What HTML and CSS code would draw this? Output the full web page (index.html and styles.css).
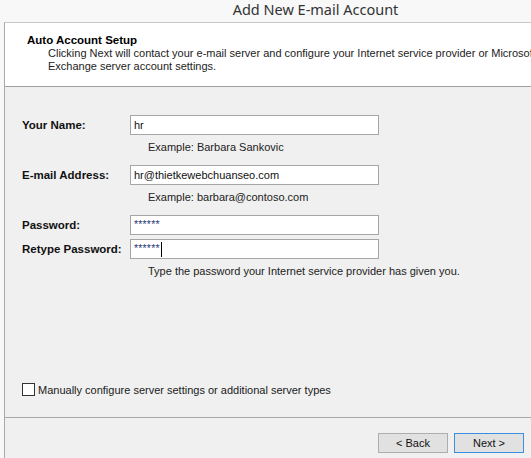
FILE: index.html
```html
<!DOCTYPE html>
<html>
<head>
<meta charset="utf-8">
<link rel="stylesheet" href="styles.css">
</head>
<body>
<div class="titlebar">Add New E-mail Account</div>
<div class="dialog">
  <div class="header">
    <div class="h-title">Auto Account Setup</div>
    <div class="h-desc">Clicking Next will contact your e-mail server and configure your Internet service provider or Microsoft<br>Exchange server account settings.</div>
  </div>
  <div class="content">
    <div class="row row-first">
      <div class="label">Your Name:</div>
      <div class="input">hr</div>
    </div>
    <div class="hint">Example: Barbara Sankovic</div>
    <div class="row row-gap">
      <div class="label">E-mail Address:</div>
      <div class="input">hr@thietkewebchuanseo.com</div>
    </div>
    <div class="hint">Example: barbara@contoso.com</div>
    <div class="row row-gap">
      <div class="label">Password:</div>
      <div class="input pw">******</div>
    </div>
    <div class="row row-tight">
      <div class="label">Retype Password:</div>
      <div class="input pw">******<span class="caret"></span></div>
    </div>
    <div class="hint hint-long">Type the password your Internet service provider has given you.</div>
    <div class="spacer"></div>
    <label class="check">
      <span class="box"></span>
      <span>Manually configure server settings or additional server types</span>
    </label>
  </div>
  <div class="footer">
    <div class="btn">&lt; Back</div>
    <div class="btn btn-default">Next &gt;</div>
  </div>
</div>
</body>
</html>
```
FILE: styles.css
```css
html, body {
  margin: 0;
  padding: 0;
}
body {
  width: 531px;
  height: 458px;
  overflow: hidden;
  background: #f8f8f8;
  font-family: "Liberation Sans", Arial, sans-serif;
  font-size: 11px;
  color: #1a1a1a;
}
.titlebar {
  height: 22px;
  line-height: 18px;
  padding-left: 100px;
  text-align: center;
  font-family: "Noto Sans", "Open Sans", sans-serif;
  font-size: 14.5px;
  color: #333;
  box-sizing: border-box;
}
.dialog {
  margin-left: 4px;
  border-left: 1px solid #a9a9a9;
  border-top: 1px solid #c8c8c8;
  height: 436px;
  display: flex;
  flex-direction: column;
  background: #f0f0f0;
}
.header {
  background: #fff;
  height: 64px;
  border-bottom: 1px solid #a0a0a0;
  padding: 10px 0 0 22px;
  box-sizing: border-box;
  white-space: nowrap;
  overflow: hidden;
}
.h-title {
  font-weight: bold;
  font-size: 11.5px;
  line-height: 14px;
  color: #000;
}
.h-desc {
  padding-left: 21px;
  line-height: 13px;
  color: #222;
}
.content {
  flex: 1;
  display: flex;
  flex-direction: column;
  padding-left: 17px;
  border-bottom: 1px solid #a8a8a8;
}
.row {
  display: flex;
  align-items: center;
  height: 20px;
}
.row-first { margin-top: 28px; }
.row-gap { margin-top: 11px; }
.row-tight { margin-top: 4px; }
.label {
  width: 108px;
  font-weight: bold;
  font-size: 11.5px;
  color: #111;
}
.input {
  width: 249px;
  height: 20px;
  box-sizing: border-box;
  border: 1px solid #a6a6a6;
  background: #fff;
  padding-left: 3px;
  line-height: 17px;
  color: #111;
  display: flex;
  align-items: center;
}
.pw {
  font-size: 10.5px;
  color: #2b3a7a;
  letter-spacing: 0.2px;
  padding-bottom: 2px;
}
.caret {
  display: inline-block;
  width: 1px;
  height: 15px;
  background: #000;
  margin-left: 1px;
  margin-top: 3px;
}
.hint {
  padding-left: 126px;
  margin-top: 5px;
  line-height: 14px;
  color: #222;
}
.hint-long { margin-top: 5px; }
.spacer { flex: 1; }
.check {
  display: flex;
  align-items: center;
  margin-bottom: 21px;
  color: #1a1a1a;
}
.box {
  width: 11px;
  height: 11px;
  border: 1px solid #333;
  background: #fff;
  margin-right: 3px;
}
.footer {
  height: 41px;
  display: flex;
  justify-content: flex-end;
  align-items: flex-start;
  padding: 15px 7px 0 0;
  box-sizing: border-box;
  gap: 6px;
}
.btn {
  width: 70px;
  height: 20px;
  box-sizing: border-box;
  border: 1px solid #adadad;
  background: #e1e1e1;
  display: flex;
  align-items: center;
  justify-content: center;
  color: #111;
}
.btn-default {
  border-color: #3c8fe0;
}
```
